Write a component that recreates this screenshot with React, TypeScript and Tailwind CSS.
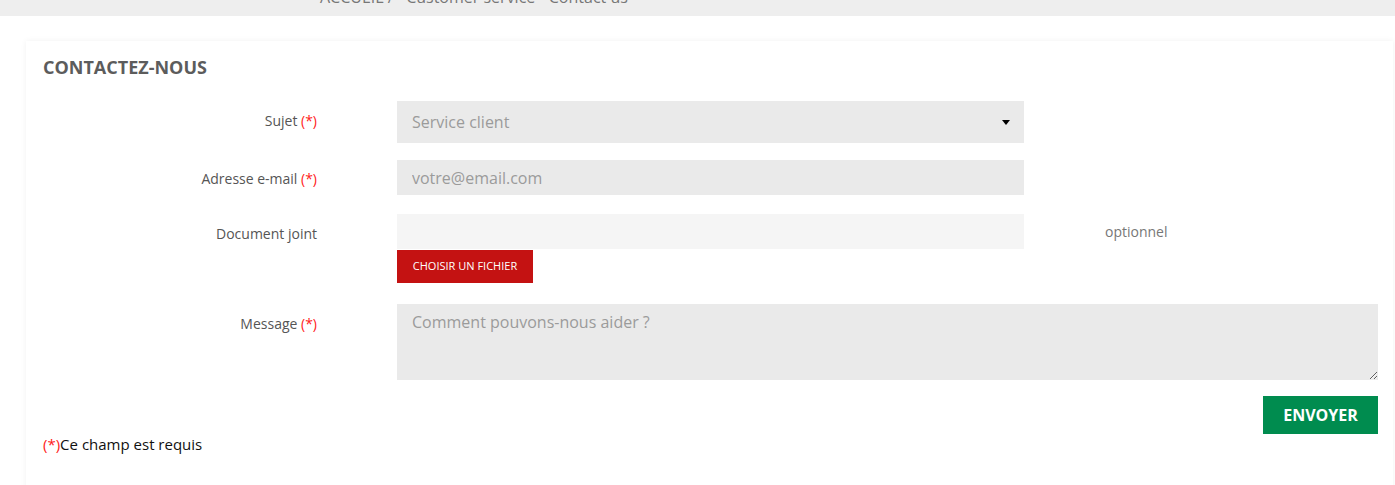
import React from "react";

const font = "font-['Open_Sans',sans-serif]";

function Req() {
  return <span className="text-[#ff1a1a]">(*)</span>;
}

function Label({ children }: { children: React.ReactNode }) {
  return (
    <div className="w-[274px] shrink-0 text-right text-[14px] text-[#555555] leading-5">
      {children}
    </div>
  );
}

export default function App() {
  return (
    <div className={`${font} bg-white min-h-screen`}>
      {/* fil d'ariane coupé en haut */}
      <div className="h-4 bg-[#eeeeee] overflow-hidden">
        <div className="pl-[320px] -mt-[13px] text-[16px] leading-5 text-[#777777] whitespace-pre">
          {"ACCUEIL /   Customer service - Contact us"}
        </div>
      </div>

      <div className="pt-[25px] pl-[26px]">
        <div className="w-[1367px] bg-white shadow-[0_0_6px_rgba(0,0,0,0.06)] pl-[17px] pr-[15px] pt-[14px] pb-[40px]">
          <h1 className="text-[18px] font-bold text-[#5c5c5c] leading-[24px] uppercase">
            Contactez-nous
          </h1>

          <div className="mt-[22px] flex flex-col">
            {/* Sujet */}
            <div className="flex items-center">
              <div className="-mt-[2px]">
                <Label>
                  Sujet <Req />
                </Label>
              </div>
              <div className="ml-[80px] w-[627px] h-[42px] bg-[#eaeaea] flex items-center justify-between pl-[15px] pr-[15px]">
                <span className="text-[16px] text-[#9b9b9b]">Service client</span>
                <svg width="8" height="5" viewBox="0 0 8 5" className="-mr-[1px]">
                  <path d="M0 0h8L4 5z" fill="#000" />
                </svg>
              </div>
            </div>

            {/* Email */}
            <div className="flex items-center mt-[17px]">
              <div className="mt-[2px]">
                <Label>
                  Adresse e-mail <Req />
                </Label>
              </div>
              <input
                className="ml-[80px] w-[627px] h-[35px] bg-[#eaeaea] px-[15px] text-[16px] text-[#555] outline-none placeholder:text-[#9b9b9b]"
                placeholder="votre@email.com"
              />
            </div>

            {/* Document */}
            <div className="flex items-start mt-[19px]">
              <div className="pt-[10px]">
                <Label>Document joint</Label>
              </div>
              <div className="ml-[80px] w-[627px] flex flex-col">
                <div className="h-[35px] bg-[#f5f5f5]" />
                <button className="mt-[1px] w-[136px] h-[33px] bg-[#c41212] text-white text-[11px] uppercase">
                  Choisir un fichier
                </button>
              </div>
              <div className="ml-[81px] pt-[8px] text-[14px] leading-5 text-[#777777]">optionnel</div>
            </div>

            {/* Message */}
            <div className="flex items-start mt-[21px]">
              <div className="pt-[10px]">
                <Label>
                  Message <Req />
                </Label>
              </div>
              <textarea
                className="ml-[80px] w-[981px] h-[76px] bg-[#eaeaea] px-[15px] pt-[6px] text-[16px] text-[#555] outline-none placeholder:text-[#9b9b9b] block"
                placeholder="Comment pouvons-nous aider ?"
              />
            </div>

            <div className="flex justify-end mt-[16px]">
              <button className="w-[115px] h-[38px] bg-[#008c4f] text-white text-[16px] font-bold uppercase">
                Envoyer
              </button>
            </div>

            <div className="mt-[0px] text-[15px] leading-5 text-[#111111]">
              <Req />Ce champ est requis
            </div>
          </div>
        </div>
      </div>
    </div>
  );
}
